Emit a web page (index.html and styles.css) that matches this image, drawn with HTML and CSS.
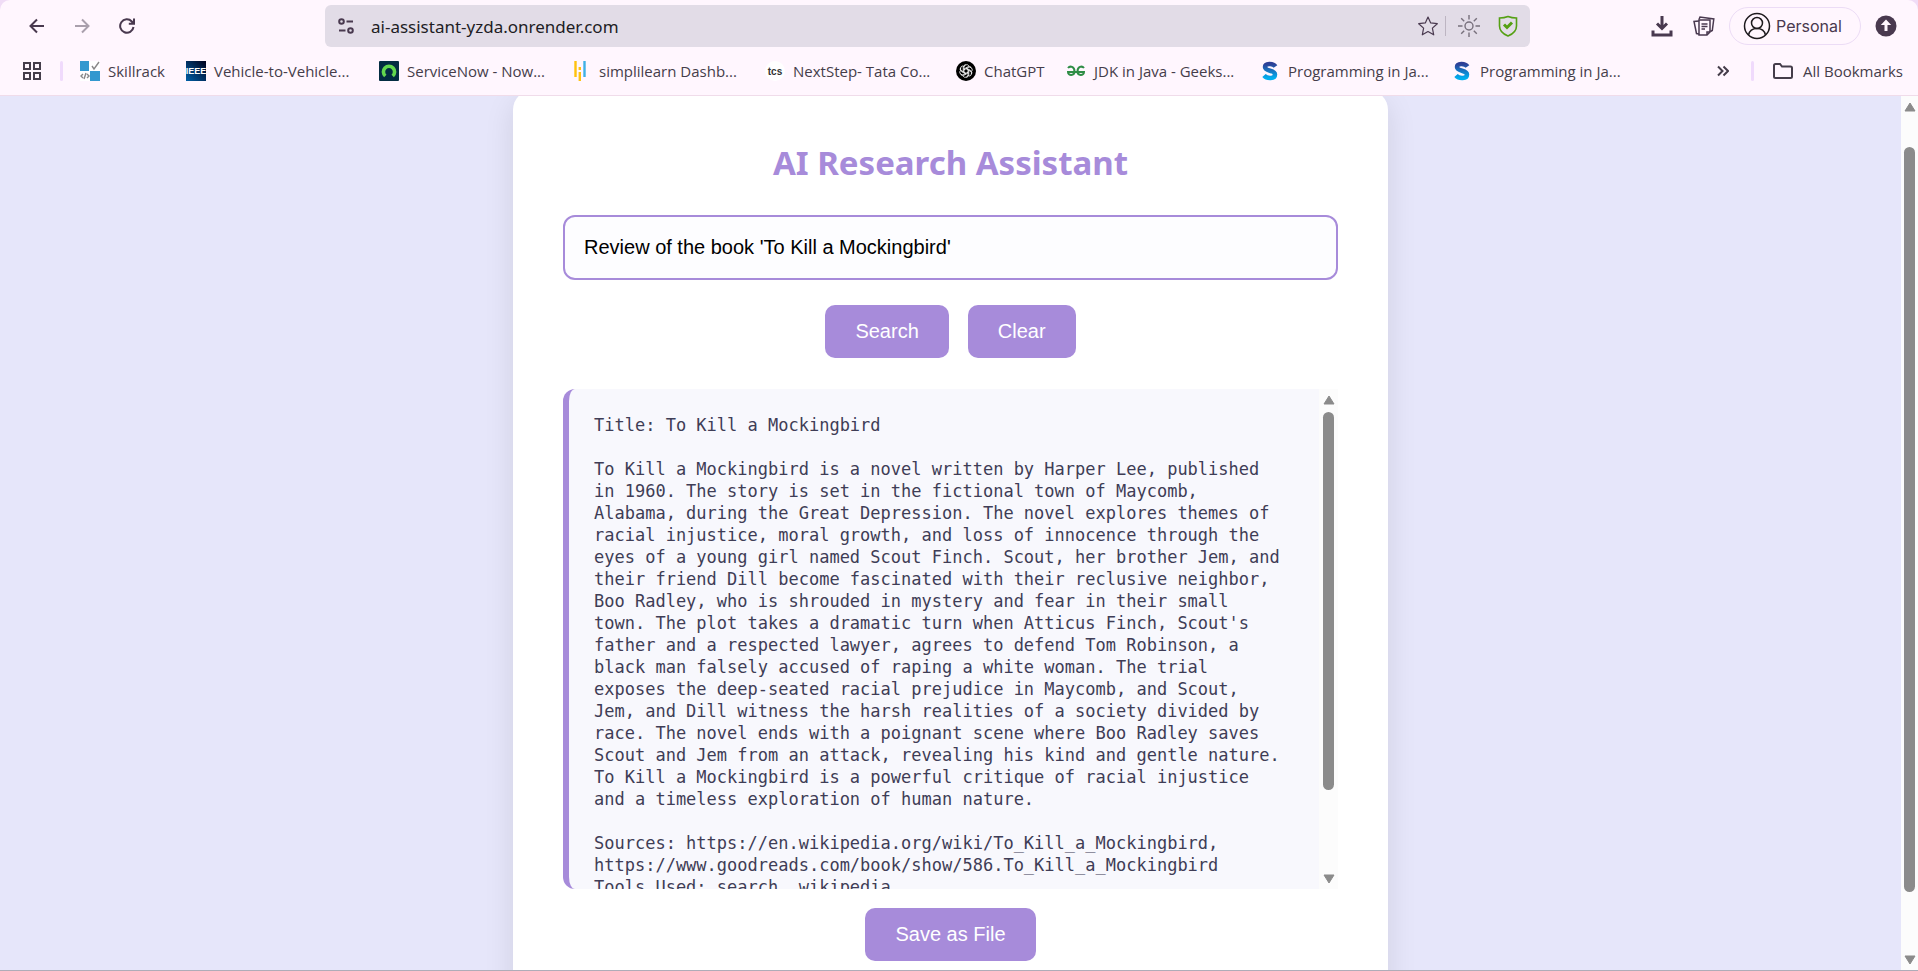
FILE: index.html
```html
<!DOCTYPE html>
<html lang="en">
<head>
<meta charset="utf-8">
<title>AI Research Assistant</title>
<link rel="stylesheet" href="styles.css">
</head>
<body>
<header class="chrome">
  <div class="toolbar">
    <nav class="nav-buttons" aria-label="History">
      <button class="icon-button" aria-label="Back"><svg width="16" height="16" viewBox="0 0 16 16" class="stroke"><path d="M15 8H2M8 1.5 1.5 8 8 14.5"/></svg></button>
      <button class="icon-button dim" aria-label="Forward"><svg width="16" height="16" viewBox="0 0 16 16" class="stroke"><path d="M1 8h13M8 1.5 14.500 8 8 14.500"/></svg></button>
      <button class="icon-button" aria-label="Reload"><svg width="16" height="16" viewBox="0 0 16 16" class="stroke"><path d="M14.500 9A6.700 6.700 0 1 1 12.800 3.500L14.500 5.500M15 .5v5.300H9.800"/></svg></button>
    </nav>
    <div class="address">
      <svg width="18" height="18" viewBox="0 0 18 18" class="stroke"><circle cx="4.500" cy="4.500" r="2.300"/><path d="M9.500 4.500H16M2 13.500h6.500"/><circle cx="13.500" cy="13.500" r="2.300"/></svg>
      <input class="address-input" type="text" aria-label="Address" value="ai-assistant-yzda.onrender.com">
      <button class="icon-button" aria-label="Bookmark this page"><svg width="22" height="22" viewBox="0 0 22 22" class="stroke fine"><path stroke-linejoin="round" d="m11 2 2.700 5.900 6.600.8-4.900 4.400 1.300 6.700-5.700-3.300-5.700 3.300 1.300-6.700-4.900-4.400 6.600-.8z"/></svg></button>
      <span class="address-rule"></span>
      <button class="icon-button sun" aria-label="Brightness"><svg width="22" height="22" viewBox="0 0 22 22" class="stroke thin"><circle cx="11" cy="11" r="4"/><path d="M11 0v4.500M11 17.500V22M0 11h4.500M17.500 11H22M3.200 3.200l3 3M15.800 15.800l3 3M18.800 3.200l-3 3M6.200 15.800l-3 3"/></svg></button>
      <button class="icon-button shield" aria-label="Site safety"><svg width="20" height="22" viewBox="0 0 20 22" class="stroke"><path d="M10 1.500c2.500 1 5 1.500 8.500 1.500v8c0 4.500-3.500 8-8.500 10-5-2-8.500-5.500-8.500-10V3C5 3 7.500 2.500 10 1.500z"/><path class="heavy" d="m6 9.500 3 3 5-5"/></svg></button>
    </div>
    <div class="tools">
      <button class="icon-button" aria-label="Downloads"><svg width="22" height="22" viewBox="0 0 22 22" class="stroke heavy"><path d="M11 1v12M6 8.500l5 5 5-5M2 15.500V20h18v-4.500"/></svg></button>
      <button class="icon-button" aria-label="Reading list"><svg width="22" height="20" viewBox="0 0 22 20" class="stroke mid"><path d="M6 4h11v12l-3 3H6z"/><path d="M14 19v-3h3M8.500 8h6M8.500 10.500h6M8.500 13h3.500M6 18l-2.500-.5L1 5.500 6 5M6 3.500 7 1l13.800 2-1.500 11.500-2 1"/></svg></button>
      <button class="profile"><svg width="28" height="28" viewBox="0 0 28 28" class="stroke mid"><circle cx="14" cy="14" r="12.500"/><circle cx="14" cy="11" r="5.500"/><path d="M5.500 23c1-4.500 4.500-6.500 8.500-6.500s7.500 2 8.500 6.500"/></svg>Personal</button>
      <button class="icon-button" aria-label="Update"><svg width="22" height="22" viewBox="0 0 22 22"><circle cx="11" cy="11" r="10.500" fill="#49394f"/><path d="M11 4.500 5.800 10h3.700v6h3v-6h3.700z" fill="#fff6fe"/></svg></button>
    </div>
  </div>
  <nav class="bookmarks" aria-label="Bookmarks">
    <button class="icon-button apps" aria-label="Tab groups"><svg width="18" height="18" viewBox="0 0 18 18" class="stroke"><path d="M1 1h6v6H1zM11 1h6v6h-6zM1 11h6v6H1zM11 11h6v6h-6z"/></svg></button>
    <span class="rule"></span>
    <div class="links">
      <a href="#" class="bookmark w-skill"><svg width="20" height="20" viewBox="0 0 20 20"><path fill="#fff" d="M0 0h20v20H0z"/><path fill="#3398cf" d="M0 0h9v10H0zM10 10h10v10H10z"/><path d="m12 5 2 3 5-7M3 13l-2 2 2 2M7 13l2 2-2 2M6 12l-2 6" fill="none" stroke="#888" stroke-width="1.400"/></svg><span>Skillrack</span></a>
      <a href="#" class="bookmark w-ieee"><svg width="20" height="20" viewBox="0 0 20 20"><defs><linearGradient id="navy" x1="0" y1="1" x2="1" y2="0"><stop stop-color="#0060a8"/><stop offset="1" stop-color="#00001c"/></linearGradient></defs><path fill="url(#navy)" d="M0 0h20v20H0z"/><text x="10" y="13" class="ieee" text-anchor="middle">IEEE</text></svg><span>Vehicle-to-Vehicle...</span></a>
      <a href="#" class="bookmark w-now"><svg width="20" height="20" viewBox="0 0 20 20"><rect width="20" height="20" rx="1" fill="#032d42"/><path d="M6.300 15a5.600 5.600 0 1 1 7.400 0" fill="none" stroke="#62d84e" stroke-width="3.600"/></svg><span>ServiceNow - Now...</span></a>
      <a href="#" class="bookmark w-simpli"><svg width="20" height="20" viewBox="0 0 20 20" fill="none" stroke-width="2.400"><path d="M4.500 0v16M8.800 11v9M8.800 6v3" stroke="#ffc20e"/><path d="M13.500 0v16" stroke="#3fb1e5"/></svg><span>simplilearn Dashb...</span></a>
      <a href="#" class="bookmark w-tcs"><svg width="20" height="20" viewBox="0 0 20 20"><circle cx="10" cy="10" r="10" fill="#fff"/><text x="10" y="14" class="tcs" text-anchor="middle">tcs</text></svg><span>NextStep- Tata Co...</span></a>
      <a href="#" class="bookmark w-gpt"><svg width="20" height="20" viewBox="0 0 20 20"><circle cx="10" cy="10" r="10"/><g fill="none" stroke="#fff" stroke-width=".8"><path id="petal" d="M8 11.200V6.300a2.700 2.700 0 0 1 4.900-1.500M8 8l3.800-2.200a2.700 2.700 0 0 1 3.500.8"/><use href="#petal" transform="rotate(60 10 10)"/><use href="#petal" transform="rotate(120 10 10)"/><use href="#petal" transform="rotate(180 10 10)"/><use href="#petal" transform="rotate(240 10 10)"/><use href="#petal" transform="rotate(300 10 10)"/></g></svg><span>ChatGPT</span></a>
      <a href="#" class="bookmark w-geeks"><svg width="20" height="20" viewBox="0 0 20 20" fill="none" stroke="#2f8d46" stroke-width="2"><path d="M2 7c2-2.500 6.500-1.500 6.500 3.500 0 4.500-6.500 4.500-6.500.5h16c0 4-6.500 4-6.500-.5C11.500 5.500 16 4.500 18 7"/></svg><span>JDK in Java - Geeks...</span></a>
      <a href="#" class="bookmark w-prog"><svg width="20" height="20" viewBox="0 0 20 20"><defs><linearGradient id="sea" x2="0" y2="1"><stop stop-color="#2d3f96"/><stop offset="1" stop-color="#00aeef"/></linearGradient></defs><path d="M15.500 5.500C13 2 5 2 5 6c0 4.500 10 3 10 7.500 0 4.500-8 4.500-11 1" fill="none" stroke="url(#sea)" stroke-width="4.500"/></svg><span>Programming in Ja...</span></a>
      <a href="#" class="bookmark"><svg width="20" height="20" viewBox="0 0 20 20"><path d="M15.500 5.500C13 2 5 2 5 6c0 4.500 10 3 10 7.500 0 4.500-8 4.500-11 1" fill="none" stroke="url(#sea)" stroke-width="4.500"/></svg><span>Programming in Ja...</span></a>
    </div>
    <button class="icon-button more" aria-label="More bookmarks"><svg width="12" height="12" viewBox="0 0 12 12" class="stroke"><path d="m1 1.500 4.500 4.500L1 10.500M6.500 1.500 11 6l-4.500 4.500"/></svg></button>
    <span class="rule"></span>
    <button class="all-bookmarks"><svg width="20" height="16" viewBox="0 0 20 16" class="stroke"><path d="M1 2.500Q1 1 2.500 1H7l2 2.500h8.500Q19 3.500 19 5v8.500q0 1.500-1.500 1.500h-15Q1 15 1 13.500z"/></svg>All Bookmarks</button>
  </nav>
</header>
<div class="viewport">
  <main class="page">
    <section class="card">
      <h1 class="title">AI Research Assistant</h1>
      <input class="query" type="text" aria-label="Research query" value="Review of the book 'To Kill a Mockingbird'">
      <div class="actions">
        <button class="primary">Search</button>
        <button class="primary">Clear</button>
      </div>
      <div class="result">
        <pre class="result-text">Title: To Kill a Mockingbird

To Kill a Mockingbird is a novel written by Harper Lee, published
in 1960. The story is set in the fictional town of Maycomb,
Alabama, during the Great Depression. The novel explores themes of
racial injustice, moral growth, and loss of innocence through the
eyes of a young girl named Scout Finch. Scout, her brother Jem, and
their friend Dill become fascinated with their reclusive neighbor,
Boo Radley, who is shrouded in mystery and fear in their small
town. The plot takes a dramatic turn when Atticus Finch, Scout's
father and a respected lawyer, agrees to defend Tom Robinson, a
black man falsely accused of raping a white woman. The trial
exposes the deep-seated racial prejudice in Maycomb, and Scout,
Jem, and Dill witness the harsh realities of a society divided by
race. The novel ends with a poignant scene where Boo Radley saves
Scout and Jem from an attack, revealing his kind and gentle nature.
To Kill a Mockingbird is a powerful critique of racial injustice
and a timeless exploration of human nature.

Sources: https://en.wikipedia.org/wiki/To_Kill_a_Mockingbird,
https://www.goodreads.com/book/show/586.To_Kill_a_Mockingbird
Tools Used: search, wikipedia</pre>
        <div class="scrollbar" aria-hidden="true">
          <svg width="12" height="10" viewBox="0 0 12 10"><path d="M6 1 11 9H1z" class="arrow"/></svg>
          <span class="track"><span class="thumb result-thumb"></span></span>
          <svg width="12" height="10" viewBox="0 0 12 10"><path d="M6 9 11 1H1z" class="arrow"/></svg>
        </div>
      </div>
      <button class="primary">Save as File</button>
    </section>
  </main>
  <div class="scrollbar page-scrollbar" aria-hidden="true">
    <svg width="12" height="10" viewBox="0 0 12 10"><path d="M6 1 11 9H1z" class="arrow"/></svg>
    <span class="track page-track"><span class="thumb page-thumb"></span></span>
    <svg width="12" height="10" viewBox="0 0 12 10"><path d="M6 9 11 1H1z" class="arrow"/></svg>
  </div>
</div>
</body>
</html>
```

FILE: styles.css
```css
* { box-sizing: border-box; }

body {
  margin: 0;
  height: 100vh;
  display: flex;
  flex-direction: column;
  overflow: hidden;
  background: #f0dcf6;
  font-family: Inter, "Liberation Sans", sans-serif;
  color: #49394f;
}

button {
  border: 0;
  padding: 0;
  background: none;
  font: inherit;
  color: inherit;
}

svg { display: block; flex: none; }

.stroke { fill: none; stroke: currentColor; stroke-width: 2; }
.stroke.fine { stroke-width: 1.2; }
.stroke.thin { stroke-width: 1.4; }
.stroke.mid { stroke-width: 1.5; }
.stroke.heavy, .heavy { stroke-width: 3; }

/* Browser frame */
.chrome {
  flex: none;
  background: #fff6fe;
  border-bottom: 1px solid #f0dcea;
  border-radius: 10px 10px 0 0;
}

.toolbar { display: flex; align-items: center; padding: 5px 21px 0 29px; }
.nav-buttons { display: flex; gap: 29px; width: 296px; }
.dim { color: #a99fac; }

.address {
  flex: 1;
  display: flex;
  align-items: center;
  height: 42px;
  padding: 0 12px;
  border-radius: 6px;
  background: #e2dce7;
  color: #49394f;
}

.address-input {
  flex: 1;
  min-width: 0;
  margin-left: 16px;
  padding: 0;
  border: 0;
  outline: 0;
  background: none;
  font: 17px "Noto Sans", sans-serif;
  color: #211c24;
}

.address-rule { width: 1px; height: 20px; margin: 0 12px 0 6px; background: #bdb5c2; }
.sun { color: #77707c; }
.shield { margin-left: 18px; color: #55a014; }
.shield .stroke { stroke-width: 1.6; }

.tools { display: flex; align-items: center; gap: 20px; margin-left: 121px; }

.profile {
  display: flex;
  align-items: center;
  gap: 5px;
  height: 38px;
  width: 132px;
  margin: 0 -6px;
  padding: 0 13px;
  border: 1px solid #ecdcf6;
  border-radius: 20px;
  font-size: 16px;
}

.profile svg { color: #1d1a1e; }

.bookmarks { display: flex; align-items: center; height: 48px; padding: 0 15px 0 23px; font-family: "Open Sans", sans-serif; font-size: 15px; color: #453d4a; }
.rule { width: 3px; height: 20px; border-radius: 2px; background: #f0dafc; }
.apps { margin-right: 19px; }
.links { display: flex; flex: 1; min-width: 0; margin-left: 17px; }
.bookmark { display: flex; align-items: center; gap: 8px; color: inherit; text-decoration: none; white-space: nowrap; }
.w-skill { width: 106px; }
.w-ieee { width: 193px; }
.w-now { width: 192px; }
.w-simpli { width: 194px; }
.w-tcs { width: 191px; }
.w-gpt { width: 110px; }
.w-geeks { width: 194px; }
.w-prog { width: 192px; }
.ieee { font: bold 9px "Liberation Sans", sans-serif; fill: #fff; }
.tcs { font: bold 10px "Liberation Sans", sans-serif; fill: #333; }
.more { margin-right: 22px; }
.all-bookmarks { display: flex; align-items: center; gap: 10px; margin-left: 19px; white-space: nowrap; }

/* Page */
.viewport {
  flex: 1;
  min-height: 0;
  display: flex;
  overflow: hidden;
  border-bottom: 1px solid #aeacb8;
  background: #e6e6fa;
}

.page { flex: 1; display: flex; justify-content: center; align-items: flex-start; }

.card {
  width: 46%;
  min-width: 875px;
  margin-top: -6px;
  padding: 50px;
  border-radius: 20px;
  background: #fff;
  box-shadow: 0 10px 30px rgba(0, 0, 0, .1);
  text-align: center;
}

.title { margin: 0 0 29px; font: bold 33px/46px "Noto Sans", "Open Sans", sans-serif; color: #a78bda; }

.query {
  display: block;
  width: 100%;
  height: 65px;
  padding: 0 19px;
  border: 2px solid #a78bda;
  border-radius: 12px;
  outline: 0;
  background: #fdfdff;
  font: 20px "Liberation Sans", Arial, sans-serif;
  color: #000;
}

.actions { display: flex; justify-content: center; gap: 19px; margin: 25px 0 31px; }

.primary {
  height: 53px;
  padding: 0 30px;
  border-radius: 10px;
  background: #a78bda;
  font: 20px "Liberation Sans", Arial, sans-serif;
  color: #fff;
}

.result {
  display: flex;
  height: 500px;
  margin-bottom: 19px;
  overflow: hidden;
  border-left: 6px solid #a78bda;
  border-radius: 12px 0 0 12px;
  background: #f8f8fd;
  text-align: left;
}

.result-text {
  flex: 1;
  margin: 0;
  padding: 25px;
  font: 17px/22px "DejaVu Sans Mono", Consolas, monospace;
  color: #3f3d56;
}

.scrollbar {
  flex: none;
  display: flex;
  flex-direction: column;
  align-items: center;
  width: 19px;
  padding: 6px 0 5px;
  background: #fcfcfc;
}

.arrow { fill: #8b8b8b; stroke: #8b8b8b; stroke-linejoin: round; }
.track { flex: 1; width: 11px; padding: 7px 0; }
.thumb { display: block; border-radius: 6px; background: #8b8b8b; }
.result-thumb { height: 83%; }
.page-scrollbar { width: 17px; }
.page-track { padding-top: 35px; }
.page-thumb { height: 93%; }
```
